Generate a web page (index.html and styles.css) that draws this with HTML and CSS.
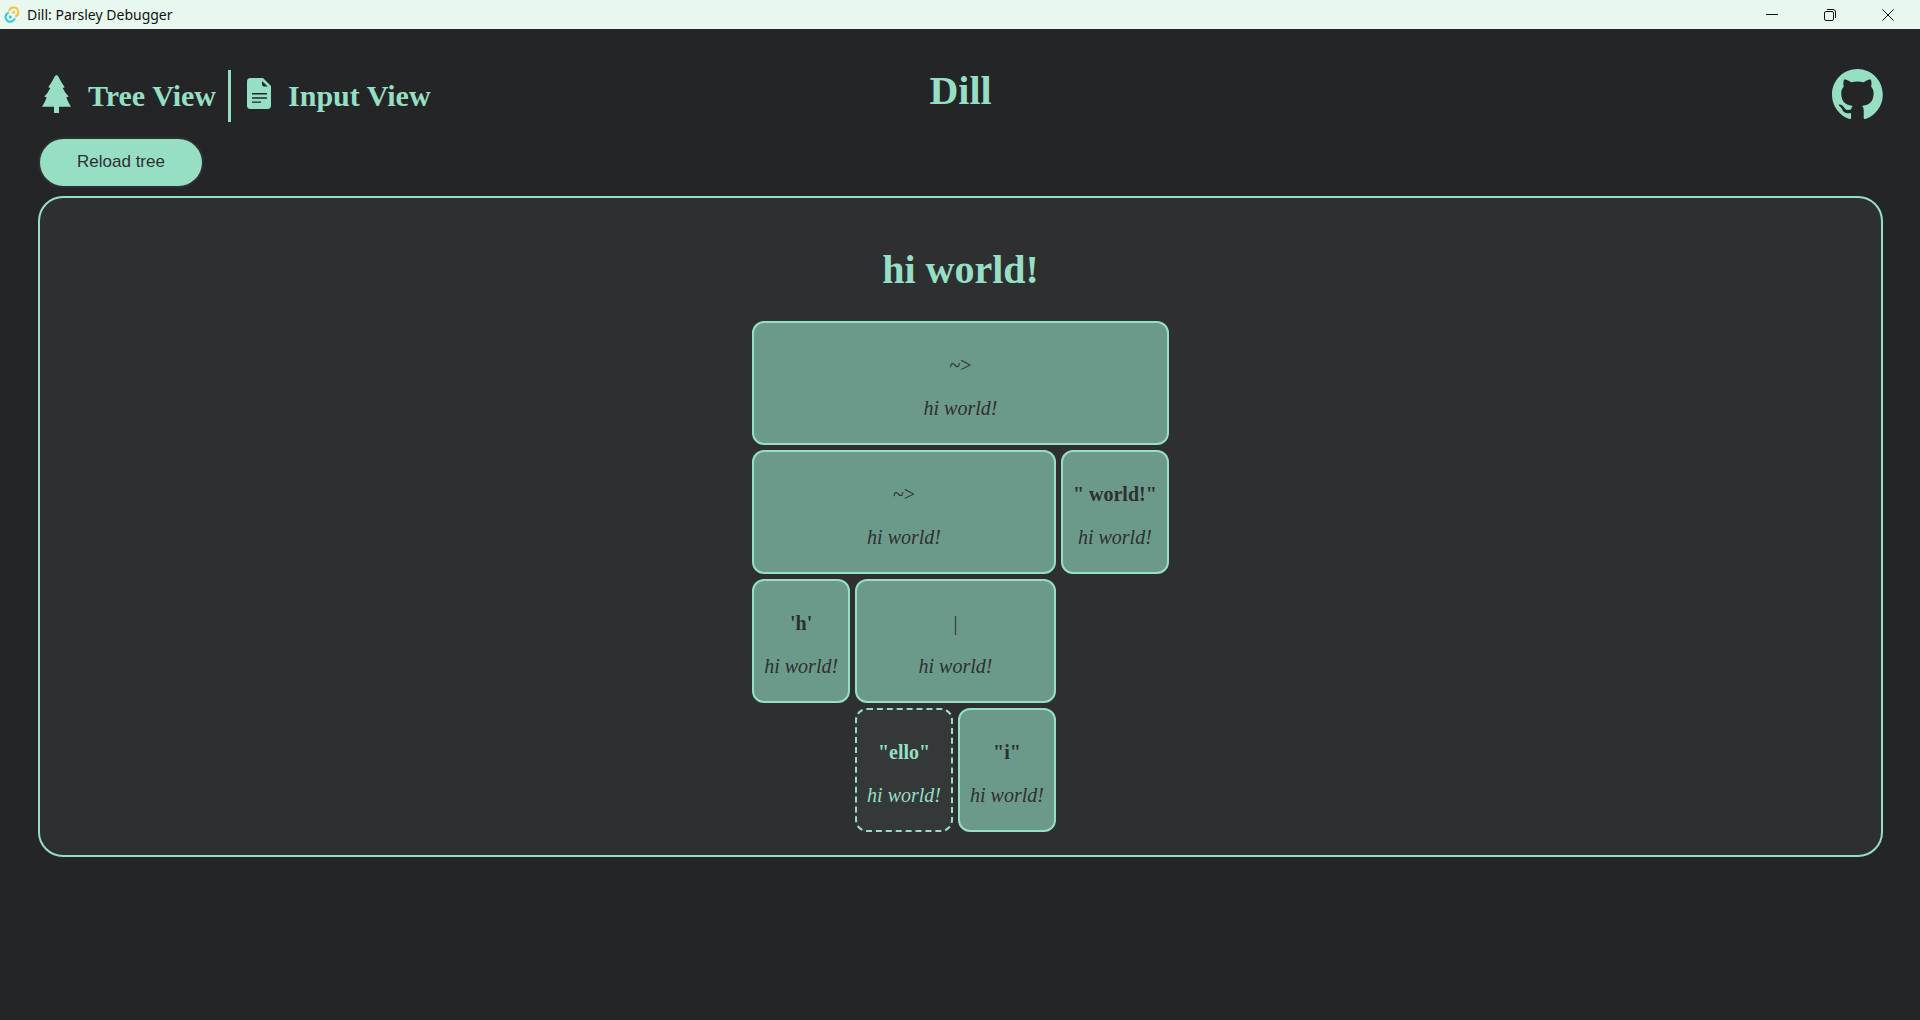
FILE: index.html
```html
<!DOCTYPE html>
<html lang="en">
<head>
<meta charset="utf-8">
<meta name="viewport" content="width=device-width, initial-scale=1">
<title>Dill: Parsley Debugger</title>
<link rel="stylesheet" href="styles.css">
</head>
<body>
<div class="titlebar">
  <svg class="app-icon" viewBox="0 0 16 17" aria-hidden="true">
    <g fill="none" stroke-width="2">
      <path d="M5 5.600A4.700 4.700 0 1 1 11 10.600" stroke="#f5c242"/>
      <path d="M4.700 6.600A4.700 4.700 0 1 0 10.800 12.200" stroke="#2cc8d8"/>
    </g>
    <circle cx="9.700" cy="6.200" r="1.500" fill="#f5c242"/>
    <circle cx="6.300" cy="11" r="1.500" fill="#2cc8d8"/>
  </svg>
  <span class="window-title">Dill: Parsley Debugger</span>
  <div class="window-controls">
    <button class="window-button" type="button" aria-label="Minimize">
      <svg viewBox="0 0 12 12"><path d="M0 5.500H12"/></svg>
    </button>
    <button class="window-button" type="button" aria-label="Restore">
      <svg viewBox="0 0 12 12"><rect x=".5" y="2.500" width="9" height="9" rx="1.500"/><path d="M3 .5H9Q11.500 .5 11.500 3V9"/></svg>
    </button>
    <button class="window-button" type="button" aria-label="Close">
      <svg viewBox="0 0 12 12"><path d="M.5 .5L11.500 11.500M11.500 .5L.5 11.500"/></svg>
    </button>
  </div>
</div>

<div class="app">
  <header class="header">
    <nav class="tabs">
      <button class="tab tab-tree" type="button">
        <svg class="tree-icon" viewBox="0 0 29 38" aria-hidden="true"><path d="M14.500 0Q15.500 0 16.300 1.500Q19 7 22.700 12.300L20.700 13Q23 18 26.700 21.500L24.300 22.400Q26 27 29 31.700H17V38H12V31.700H0Q3 27 4.700 22.400L2.300 21.500Q6 18 8.300 13L6.300 12.300Q10 7 12.700 1.500Q13.500 0 14.500 0Z"/></svg>
        <span>Tree View</span>
      </button>
      <button class="tab" type="button">
        <svg class="file-icon" viewBox="0 0 24 31" aria-hidden="true"><path fill-rule="evenodd" d="M3.500 0H16L24 8V27.500Q24 31 20.500 31H3.500Q0 31 0 27.500V3.500Q0 0 3.500 0ZM15 3V6.500Q15 8.500 17 8.500H20.700ZM5 15V16.400H20V15ZM5 19.300V20.700H20V19.300ZM5 23.400V24.800H14V23.400Z"/></svg>
        <span>Input View</span>
      </button>
    </nav>
    <h1 class="title">Dill</h1>
    <a class="github" href="#" aria-label="GitHub">
      <svg viewBox="0 0 98 96" aria-hidden="true"><path fill-rule="evenodd" d="M48.854 0C21.839 0 0 22 0 49.217c0 21.756 13.993 40.172 33.405 46.690 2.427.49 3.316-1.059 3.316-2.362 0-1.141-.08-5.052-.08-9.127-13.590 2.934-16.420-5.867-16.420-5.867-2.184-5.704-5.420-7.170-5.420-7.170-4.448-3.015.324-3.015.324-3.015 4.934.326 7.523 5.052 7.523 5.052 4.367 7.496 11.404 5.378 14.235 4.074.404-3.178 1.699-5.378 3.074-6.600-10.839-1.141-22.243-5.378-22.243-24.283 0-5.378 1.940-9.778 5.014-13.200-.485-1.222-2.184-6.275.486-13.038 0 0 4.125-1.304 13.426 5.052a46.970 46.970 0 0 1 12.214-1.630c4.125 0 8.330.571 12.213 1.630 9.302-6.356 13.427-5.052 13.427-5.052 2.670 6.763.970 11.816.485 13.038 3.155 3.422 5.015 7.822 5.015 13.200 0 18.905-11.404 23.060-22.324 24.283 1.780 1.548 3.316 4.481 3.316 9.126 0 6.600-.08 11.897-.08 13.526 0 1.304.890 2.853 3.316 2.364 19.412-6.520 33.405-24.935 33.405-46.691C97.707 22 75.788 0 48.854 0z"/></svg>
    </a>
  </header>

  <button class="reload" type="button">Reload tree</button>

  <main class="panel">
    <h2 class="input-text">hi world!</h2>
    <div class="subtree">
      <div class="node"><p>~&gt;</p><p class="consumed">hi world!</p></div>
      <div class="children">
        <div class="subtree">
          <div class="node"><p>~&gt;</p><p class="consumed">hi world!</p></div>
          <div class="children">
            <div class="subtree">
              <div class="node leaf"><p>'h'</p><p class="consumed">hi world!</p></div>
            </div>
            <div class="subtree">
              <div class="node"><p>|</p><p class="consumed">hi world!</p></div>
              <div class="children">
                <div class="subtree">
                  <div class="node leaf failed"><p>"ello"</p><p class="consumed">hi world!</p></div>
                </div>
                <div class="subtree">
                  <div class="node leaf"><p>"i"</p><p class="consumed">hi world!</p></div>
                </div>
              </div>
            </div>
          </div>
        </div>
        <div class="subtree">
          <div class="node leaf"><p>" world!"</p><p class="consumed">hi world!</p></div>
        </div>
      </div>
    </div>
  </main>
</div>
</body>
</html>
```
FILE: styles.css
```css
:root {
  --mint: #96dfc5;
  --background: #242527;
  --panel: #2e2f31;
}

* {
  box-sizing: border-box;
}

body {
  margin: 0;
  min-height: 100vh;
  background: var(--background);
  color: var(--mint);
  font-family: "Liberation Serif", "Times New Roman", serif;
}

button {
  border: 0;
  padding: 0;
  background: none;
  color: inherit;
  font: inherit;
  cursor: pointer;
}

h1,
h2,
p {
  margin: 0;
}

svg {
  display: block;
}

.titlebar {
  display: flex;
  align-items: center;
  height: 29px;
  padding: 0 3px 0 4px;
  background: #e8f8ef;
  color: #111;
}

.app-icon {
  width: 16px;
  height: 17px;
}

.window-title {
  margin-left: 7px;
  font: 14px/16px "Noto Sans", sans-serif;
}

.window-controls {
  display: flex;
  height: 100%;
  margin-left: auto;
}

.window-button {
  display: grid;
  place-items: center;
  width: 58px;
}

.window-button svg {
  width: 12px;
  height: 12px;
  fill: none;
  stroke: #111;
}

.app {
  padding: 40px 37px 40px 38px;
}

.header {
  display: grid;
  grid-template-columns: 1fr auto 1fr;
  align-items: start;
  height: 70px;
}

.tabs {
  display: flex;
  margin-top: 1px;
}

.tab {
  display: flex;
  align-items: center;
  gap: 17px;
  height: 52px;
  padding-left: 16px;
  font-size: 30px;
  font-weight: bold;
}

.tab-tree {
  padding: 0 12px 0 4px;
  border-right: 3px solid var(--mint);
}

.tree-icon,
.file-icon,
.github svg {
  fill: var(--mint);
}

.tree-icon {
  width: 29px;
  height: 38px;
  margin-bottom: 4px;
}

.file-icon {
  width: 24px;
  height: 31px;
  margin-bottom: 5px;
}

.title {
  font-size: 40px;
  line-height: 44px;
}

.github {
  justify-self: end;
}

.github svg {
  width: 51px;
  height: 50px;
}

.reload {
  display: block;
  width: 162px;
  height: 47px;
  margin-left: 2px;
  padding-bottom: 1px;
  border-radius: 24px;
  background: var(--mint);
  box-shadow: 0 0 0 2px var(--panel);
  color: var(--panel);
  font: 17px "Liberation Sans", Arial, sans-serif;
}

.panel {
  display: flex;
  flex-direction: column;
  align-items: center;
  margin-top: 10px;
  padding: 49px 20px 23px;
  border: 2px solid var(--mint);
  border-radius: 25px;
  background: var(--panel);
}

.input-text {
  margin-bottom: 28px;
  font-size: 40px;
  line-height: 46px;
}

.subtree {
  display: flex;
  flex-direction: column;
  gap: 5px;
}

.children {
  display: flex;
  gap: 5px;
}

.node {
  display: flex;
  flex-direction: column;
  gap: 20px;
  padding: 31px 10px 23px;
  border: 2px solid var(--mint);
  border-radius: 12px;
  background: #6c9a8a;
  color: var(--panel);
  font-size: 20px;
  line-height: 23px;
  text-align: center;
  white-space: nowrap;
}

.leaf {
  font-weight: bold;
}

.failed {
  border-style: dashed;
  background: #343839;
  color: var(--mint);
}

.consumed {
  font-style: italic;
  font-weight: normal;
}
```
